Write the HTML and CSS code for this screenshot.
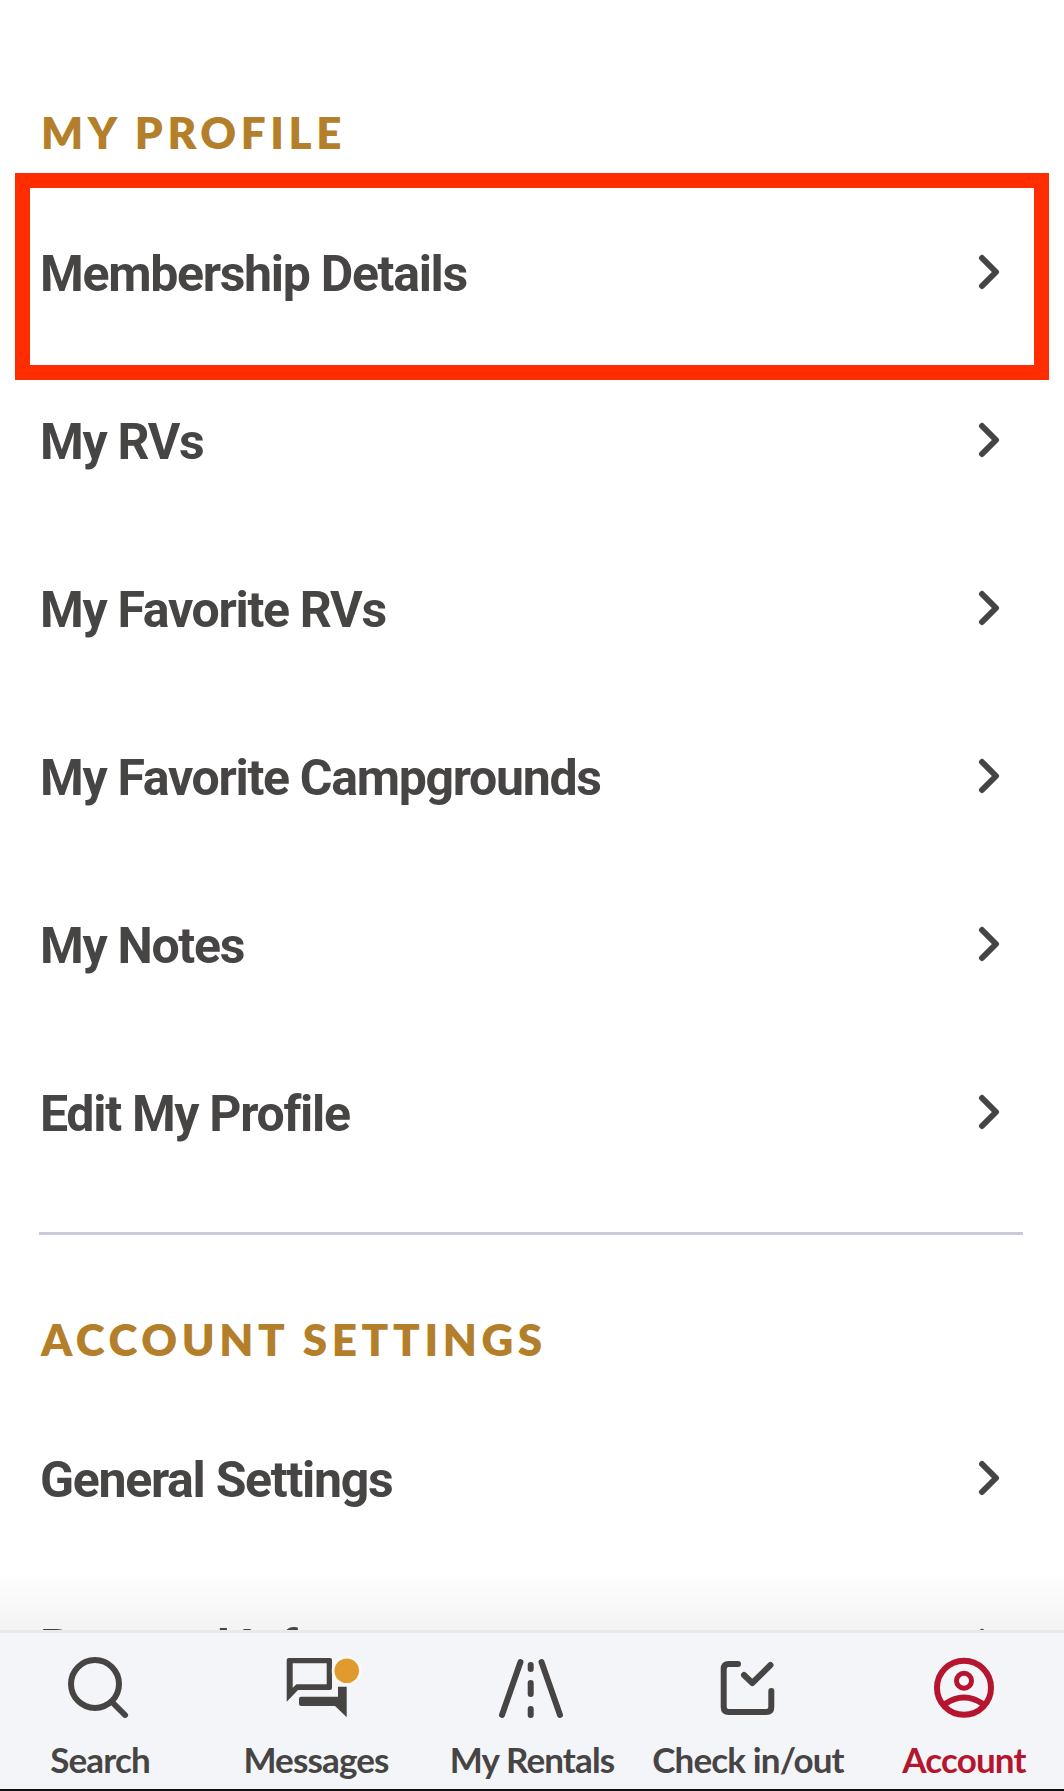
FILE: index.html
```html
<!DOCTYPE html>
<html lang="en">
<head>
<meta charset="utf-8">
<title>Account</title>
<link rel="stylesheet" href="styles.css">
</head>
<body>
<main class="menu">
  <h2 class="section-title">MY PROFILE</h2>
  <div class="list">
    <a class="row highlighted"><span>Membership Details</span><svg class="chev" viewBox="0 0 22 36"><path d="M4 4 L18 18 L4 32"/></svg></a>
    <a class="row"><span>My RVs</span><svg class="chev" viewBox="0 0 22 36"><path d="M4 4 L18 18 L4 32"/></svg></a>
    <a class="row"><span>My Favorite RVs</span><svg class="chev" viewBox="0 0 22 36"><path d="M4 4 L18 18 L4 32"/></svg></a>
    <a class="row"><span>My Favorite Campgrounds</span><svg class="chev" viewBox="0 0 22 36"><path d="M4 4 L18 18 L4 32"/></svg></a>
    <a class="row"><span>My Notes</span><svg class="chev" viewBox="0 0 22 36"><path d="M4 4 L18 18 L4 32"/></svg></a>
    <a class="row"><span>Edit My Profile</span><svg class="chev" viewBox="0 0 22 36"><path d="M4 4 L18 18 L4 32"/></svg></a>
  </div>
  <hr class="divider">
  <h2 class="section-title second">ACCOUNT SETTINGS</h2>
  <div class="list">
    <a class="row"><span>General Settings</span><svg class="chev" viewBox="0 0 22 36"><path d="M4 4 L18 18 L4 32"/></svg></a>
    <a class="row"><span>Personal Info</span><svg class="chev" viewBox="0 0 22 36"><path d="M4 4 L18 18 L4 32"/></svg></a>
  </div>
</main>
<div class="fade"></div>
<nav class="tabbar">
  <div class="tab">
    <svg viewBox="0 0 80 70"><circle cx="35" cy="34" r="24"/><path d="M52 52 L65 65"/></svg>
    <span>Search</span>
  </div>
  <div class="tab">
    <svg viewBox="0 0 80 70">
      <path class="solid" d="M13 8H54Q56 8 56 10V38Q56 40 54 40H22L10.7 51.7V10Q10.7 8 13 8ZM16.7 13.3V37.7L20.5 34.3H50.7V13.3Z"/>
      <path class="solid" d="M23 49Q23 46.7 25 46.7H62V36.7H70.7V67.3L59 56H25.5Q23 56 23 53.5Z"/>
      <circle class="halo" cx="70.7" cy="20.7" r="15"/>
      <circle class="dot" cx="70.7" cy="20.7" r="12.3"/>
    </svg>
    <span>Messages</span>
  </div>
  <div class="tab">
    <svg viewBox="0 0 80 70"><path d="M28.5 12 L10 65M49.5 12 L68 65M38.7 15V19M38.7 33V44M38.7 59V65"/></svg>
    <span>My Rentals</span>
  </div>
  <div class="tab">
    <svg viewBox="0 0 80 70"><path d="M30 14H20.7Q15.7 14 15.7 19V57Q15.7 62 20.7 62H58.3Q63.3 62 63.3 57V41"/><path d="M36 25L44.3 33L62.5 15"/></svg>
    <span>Check in/out</span>
  </div>
  <div class="tab active">
    <svg viewBox="0 0 80 70"><circle cx="40" cy="37.7" r="27"/><circle class="head" cx="40" cy="30.7" r="7.5"/><path d="M21 54Q40 41 59 54"/></svg>
    <span>Account</span>
  </div>
</nav>
</body>
</html>
```
FILE: styles.css
```css
html, body { margin: 0; padding: 0; }
body { width: 1064px; height: 1791px; overflow: hidden; position: relative; background: #fff; font-family: Roboto, sans-serif; color: #474444; }
.menu { position: relative; z-index: 1; padding: 108px 40px 0 41px; }
.section-title { margin: 0; font: 800 44px/48px Lato, sans-serif; letter-spacing: 4.6px; color: #b47f2a; }
.list { display: flex; flex-direction: column; }
.row { display: flex; justify-content: space-between; align-items: center; height: 168px; padding-right: 24px; font-weight: 700; font-size: 50px; letter-spacing: -1.3px; }
.row span { margin-left: -1px; padding-top: 4px; }
.highlighted { position: relative; margin-top: 32px; }
.highlighted::after { content: ""; position: absolute; left: -26px; right: -25px; top: -15px; bottom: -24px; border: 15px solid #ff2d00; }
.chev { width: 22px; height: 36px; fill: none; stroke: #474444; stroke-width: 6; stroke-linecap: round; stroke-linejoin: round; }
.divider { border: 0; height: 3px; background: #c9cbd9; margin: 36px 1px 0 -2px; }
.second { margin-top: 80px; margin-bottom: 31px; }
.fade { position: absolute; left: 0; right: 0; top: 1572px; height: 58px; background: linear-gradient(rgba(243,243,244,0), #f3f3f4); }
.tabbar { position: absolute; z-index: 2; left: 0; right: 0; bottom: 0; height: 161px; box-sizing: border-box; background: #f4f5f8; border-top: 3px solid #e9e9ec; border-bottom: 2px solid #111; display: grid; grid-template-columns: repeat(5, 216px); justify-content: center; padding-top: 17px; }
.tab { display: flex; flex-direction: column; align-items: center; font: 700 35px/40px Lato, sans-serif; letter-spacing: -0.85px; color: #474444; }
.tab svg { width: 80px; height: 70px; fill: none; stroke: currentColor; stroke-width: 6; stroke-linecap: round; stroke-linejoin: round; margin-bottom: 19px; overflow: visible; }
.tab .solid { fill: currentColor; stroke: none; fill-rule: evenodd; }
.tab .head { stroke-width: 5; }
.tab .halo { fill: #fbfaf6; stroke: none; }
.tab .dot { fill: #e09a2e; stroke: none; }
.active { color: #b5152e; }
```
